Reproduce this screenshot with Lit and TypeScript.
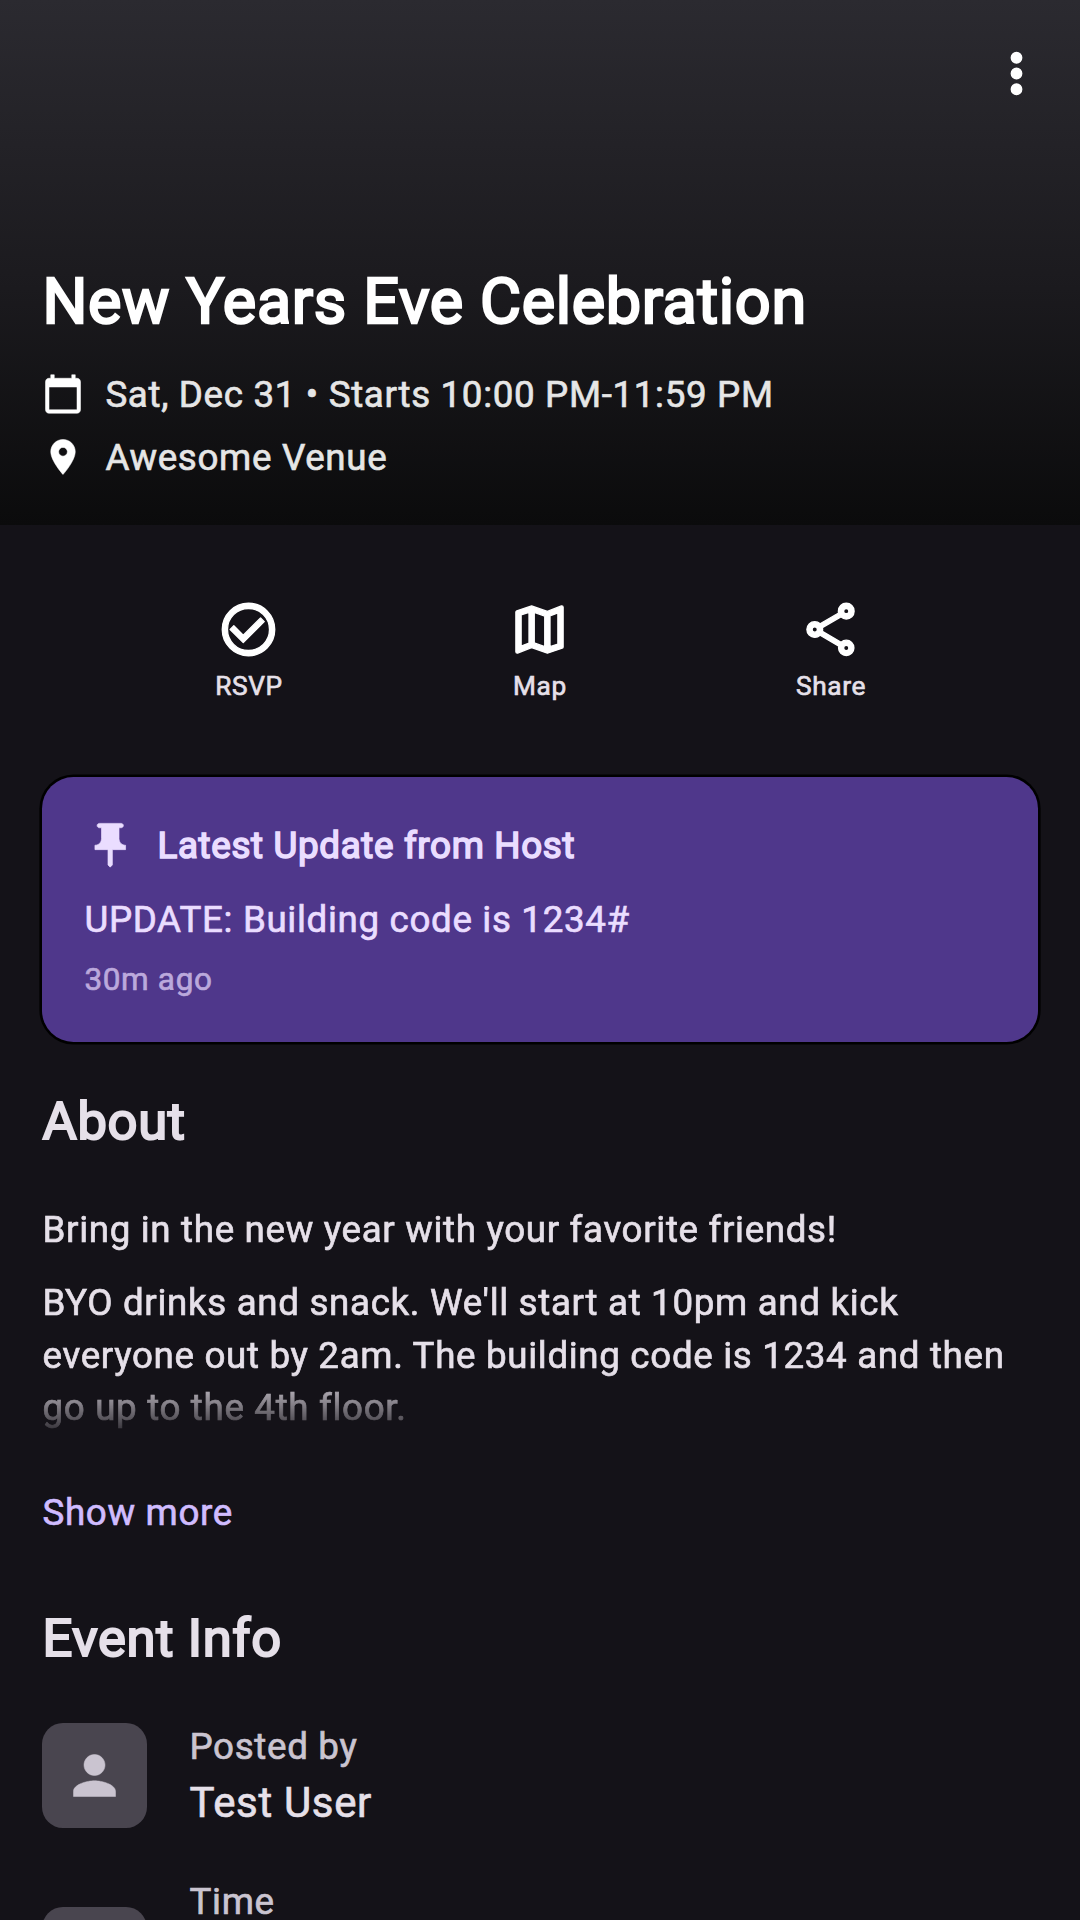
import { LitElement, html, css, svg } from "lit";
import { customElement, property } from "lit/decorators.js";

const ICONS: Record<string, string> = {
  more: "M12 8c1.1 0 2-.9 2-2s-.9-2-2-2-2 .9-2 2 .9 2 2 2zm0 2c-1.1 0-2 .9-2 2s.9 2 2 2 2-.9 2-2-.9-2-2-2zm0 6c-1.1 0-2 .9-2 2s.9 2 2 2 2-.9 2-2-.9-2-2-2z",
  calendar: "M20 3h-1V1h-2v2H7V1H5v2H4c-1.1 0-2 .9-2 2v16c0 1.1.9 2 2 2h16c1.1 0 2-.9 2-2V5c0-1.1-.9-2-2-2zm0 18H4V8h16v13z",
  place: "M12 2C8.13 2 5 5.13 5 9c0 5.25 7 13 7 13s7-7.75 7-13c0-3.87-3.13-7-7-7zm0 9.5c-1.38 0-2.5-1.12-2.5-2.5s1.12-2.5 2.5-2.5 2.5 1.12 2.5 2.5-1.12 2.5-2.5 2.5z",
  check: "M12 2C6.48 2 2 6.48 2 12s4.48 10 10 10 10-4.48 10-10S17.52 2 12 2zm0 18c-4.41 0-8-3.59-8-8s3.59-8 8-8 8 3.59 8 8-3.59 8-8 8zm4.59-12.42L10 14.17l-3.59-3.58L5 12l5 5 8-8-1.41-1.42z",
  map: "M20.5 3l-.16.03L15 5.1 9 3 3.36 4.9c-.21.07-.36.25-.36.48V20.5c0 .28.22.5.5.5l.16-.03L9 18.9l6 2.1 5.64-1.9c.21-.07.36-.25.36-.48V3.5c0-.28-.22-.5-.5-.5zM10 5.47l4 1.4v11.66l-4-1.4V5.47zm-5 .99l3-1.01v11.7l-3 1.16V6.46zm14 11.08l-3 1.01V6.86l3-1.16v11.84z",
  share: "M18 16.08c-.76 0-1.44.3-1.96.77L8.91 12.7c.05-.23.09-.46.09-.7s-.04-.47-.09-.7l7.05-4.11c.54.5 1.25.81 2.04.81 1.66 0 3-1.34 3-3s-1.34-3-3-3-3 1.34-3 3c0 .24.04.47.09.7L8.04 9.81C7.5 9.31 6.79 9 6 9c-1.66 0-3 1.34-3 3s1.34 3 3 3c.79 0 1.5-.31 2.04-.81l7.12 4.16c-.05.21-.08.43-.08.65 0 1.61 1.31 2.92 2.92 2.92s2.92-1.31 2.92-2.92-1.31-2.92-2.92-2.92zM18 4c.55 0 1 .45 1 1s-.45 1-1 1-1-.45-1-1 .45-1 1-1zM6 13c-.55 0-1-.45-1-1s.45-1 1-1 1 .45 1 1-.45 1-1 1zm12 7.02c-.55 0-1-.45-1-1s.45-1 1-1 1 .45 1 1-.45 1-1 1z",
  pin: "M16 9V4h1c.55 0 1-.45 1-1s-.45-1-1-1H7c-.55 0-1 .45-1 1s.45 1 1 1h1v5c0 1.66-1.34 3-3 3v2h5.97v7l1 1 1-1v-7H19v-2c-1.66 0-3-1.34-3-3z",
  person: "M12 12c2.21 0 4-1.79 4-4s-1.79-4-4-4-4 1.79-4 4 1.79 4 4 4zm0 2c-2.67 0-8 1.34-8 4v2h16v-2c0-2.66-5.33-4-8-4z",
  clock: "M11.99 2C6.47 2 2 6.48 2 12s4.47 10 9.99 10C17.52 22 22 17.52 22 12S17.52 2 11.99 2zM12 20c-4.42 0-8-3.58-8-8s3.58-8 8-8 8 3.58 8 8-3.58 8-8 8zm.5-13H11v6l5.25 3.15.75-1.23-4.5-2.67z",
};

@customElement("md-icon")
class MdIcon extends LitElement {
  @property() name = "more";
  static styles = css`
    :host { display: block; flex: none; width: 63px; height: 63px; }
    .glyph {
      display: block;
      width: 100%;
      height: 100%;
      fill: currentColor;
      stroke: currentColor;
      stroke-width: var(--icon-stroke, 0.2);
      stroke-linejoin: round;
    }
  `;
  render() {
    return html`<svg class="glyph" viewBox="0 0 24 24">${svg`<path d=${ICONS[this.name]}></path>`}</svg>`;
  }
}

@customElement("app-root")
class AppRoot extends LitElement {
  static styles = css`
    :host {
      display: block;
      height: 1920px;
      overflow: hidden;
      background: #141218;
      color: #e6e0e9;
      font-family: Roboto, "Liberation Sans", sans-serif;
      font-size: 36.75px;
      line-height: 52.5px;
      letter-spacing: 0.656px;
      -webkit-text-stroke: 0.65px currentColor;
    }
    h1, h2, p { margin: 0; font-weight: 400; }
    .hero {
      box-sizing: border-box;
      height: 525px;
      padding: 42px;
      display: flex;
      flex-direction: column;
      background: linear-gradient(#2b2a30, #1b1a1e 55%, #0b0b0c);
      color: #fff;
    }
    .menu { align-self: flex-end; margin-right: -10px; --icon-stroke: 0.5; }
    .title {
      margin-top: auto;
      padding-left: 0.4px;
      font-size: 63px;
      line-height: 84px;
      -webkit-text-stroke: 2.4px currentColor;
      margin-bottom: 23.5px;
    }
    .facts { display: flex; flex-direction: column; gap: 10.5px; }
    .fact { display: flex; align-items: center; gap: 21px; height: 52.5px; color: #e6e6e6; }
    .fact-text { padding: 2px 0 0 0.4px; }
    .fact md-icon { width: 42px; height: 42px; color: #fff; --icon-stroke: 0.3; }
    .actions {
      display: grid;
      grid-template-columns: repeat(3, 291px);
      justify-content: center;
      padding-top: 73px;
    }
    .action {
      display: flex;
      flex-direction: column;
      align-items: center;
      font-size: 26.25px;
      line-height: 42px;
    }
    .action md-icon { color: #fff; margin: 0 1px 4px 0; --icon-stroke: 0.5; }
    .card {
      margin: 69.5px 42px 0;
      padding: 43px 42px 39px;
      height: 183px;
      border-radius: 31.5px;
      background: #4f378b;
      color: #eaddff;
      box-shadow: 0 0 0 2.6px #000;
    }
    .card-head { display: flex; align-items: center; gap: 21px; height: 52.5px; }
    .card-head md-icon { width: 52.5px; height: 52.5px; margin-bottom: 2px; --icon-stroke: 0.3; }
    .card-title { padding-top: 1.5px; -webkit-text-stroke: 1.6px currentColor; }
    .card-text { margin-top: 22px; }
    .card-time {
      margin-top: 12px;
      font-size: 31.5px;
      line-height: 42px;
      color: #bba9dc;
    }
    .card-text, .card-time { padding-left: 0.4px; }
    .section { padding: 0 41px 0 42px; }
    .heading {
      padding-left: 0.5px;
      font-size: 52.5px;
      line-height: 73.5px;
      -webkit-text-stroke: 2.1px currentColor;
    }
    .about { margin-top: 43px; }
    .body {
      margin-top: 45.5px;
      padding-left: 0.5px;
      display: flex;
      flex-direction: column;
      gap: 21px;
      -webkit-mask-image: linear-gradient(#000 168px, transparent 238px);
      mask-image: linear-gradient(#000 168px, transparent 238px);
    }
    .more { margin-top: 52px; padding-left: 0.5px; color: #d0bcff; }
    .info { margin-top: 62.8px; }
    .rows { display: flex; flex-direction: column; margin-top: 42.7px; }
    .row { display: flex; align-items: center; gap: 42px; height: 115px; margin-bottom: 40px; }
    .row.tall { height: 172.4px; }
    .row-text { padding: 5px 0 0 0.5px; }
    .tall .row-text { align-self: flex-start; padding-top: 2.8px; }
    .avatar {
      width: 105px;
      height: 105px;
      border-radius: 21px;
      background: #49454f;
      color: #cac4d0;
      display: grid;
      place-items: center;
    }
    .label { color: #cac4d0; }
    .value { margin-top: -2.5px; font-size: 42px; line-height: 63px; }
  `;

  render() {
    return html`
      <header class="hero">
        <md-icon class="menu" name="more"></md-icon>
        <h1 class="title">New Years Eve Celebration</h1>
        <div class="facts">
          <div class="fact"><md-icon name="calendar"></md-icon><span class="fact-text">Sat, Dec 31 • Starts 10:00 PM-11:59 PM</span></div>
          <div class="fact"><md-icon name="place"></md-icon><span class="fact-text">Awesome Venue</span></div>
        </div>
      </header>
      <nav class="actions">
        ${[["check", "RSVP"], ["map", "Map"], ["share", "Share"]].map(
          ([icon, label]) => html`<div class="action"><md-icon name=${icon}></md-icon><span>${label}</span></div>`
        )}
      </nav>
      <section class="card">
        <div class="card-head"><md-icon name="pin"></md-icon><span class="card-title">Latest Update from Host</span></div>
        <p class="card-text">UPDATE: Building code is 1234#</p>
        <p class="card-time">30m ago</p>
      </section>
      <section class="section about">
        <h2 class="heading">About</h2>
        <div class="body">
          <p>Bring in the new year with your favorite friends!</p>
          <p>BYO drinks and snack. We'll start at 10pm and kick everyone out by 2am. The building code is 1234 and then go up to the 4th floor.</p>
        </div>
        <p class="more">Show more</p>
      </section>
      <section class="section info">
        <h2 class="heading">Event Info</h2>
        <div class="rows">
          <div class="row">
            <div class="avatar"><md-icon name="person"></md-icon></div>
            <div class="row-text"><p class="label">Posted by</p><p class="value">Test User</p></div>
          </div>
          <div class="row tall">
            <div class="avatar"><md-icon name="clock"></md-icon></div>
            <div class="row-text"><p class="label">Time</p></div>
          </div>
        </div>
      </section>
    `;
  }
}
